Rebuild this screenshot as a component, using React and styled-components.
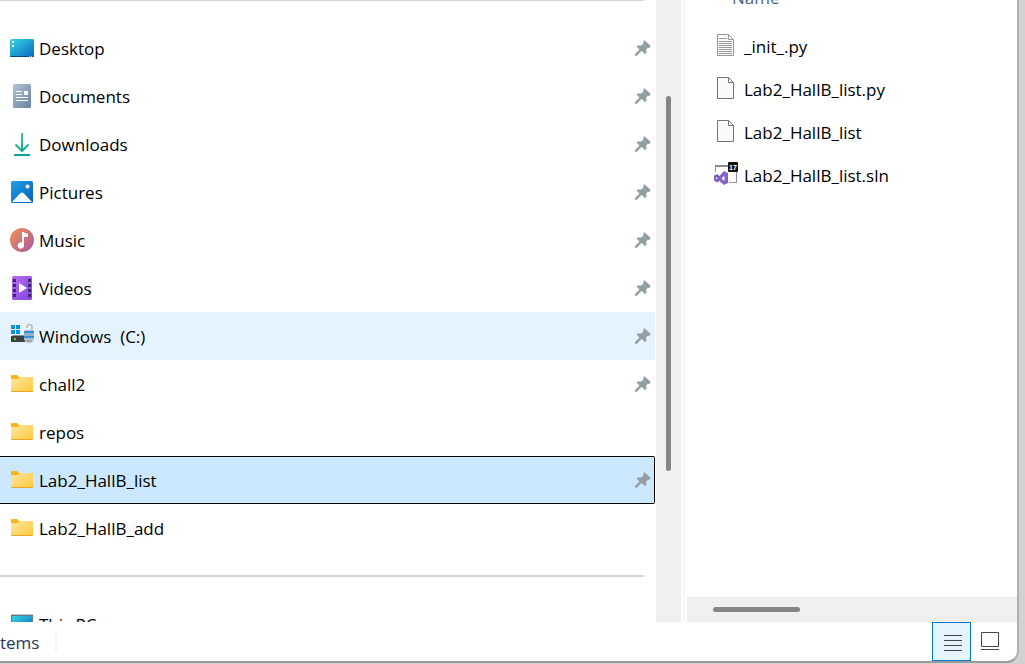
import React from 'react';
import styled, { createGlobalStyle } from 'styled-components';

const textColor = '#000';
const mutedColor = '#4c607a';
const trackColor = '#efefef';
const thumbColor = '#858585';
const accentColor = '#0078d4';

const GlobalStyle = createGlobalStyle`
  * {
    box-sizing: border-box;
  }

  body {
    margin: 0;
    background: #d2d2d2;
    color: ${textColor};
    font-family: 'Open Sans', 'Noto Sans', sans-serif;
    font-size: 17px;
    line-height: 24px;
  }
`;

const Desktop = styled.div`
  height: 100vh;
  overflow: hidden;
  padding: 0 6px 1px 0;
`;

const Window = styled.div`
  background: #fff;
  border-bottom: 2px solid #9b9b9b;
  border-bottom-right-radius: 12px;
  border-right: 2px solid #aeb0b1;
  display: flex;
  flex-direction: column;
  height: 100%;
  overflow: hidden;
`;

const Panes = styled.div`
  display: grid;
  flex: 1;
  grid-template-columns: 64vw 25px 6px minmax(0, 1fr);
  min-height: 0;
`;

const Sidebar = styled.nav`
  overflow: hidden;
  padding-right: 1px;
`;

const Divider = styled.hr`
  border: 0;
  border-top: ${({ $cut }) => ($cut ? 1 : 2)}px solid #d5d5d5;
  margin: ${({ $cut }) => ($cut ? 0 : 23)}px 11px 23px 0;
`;

const List = styled.ul`
  list-style: none;
  margin: 0;
  padding: 0;
`;

const Place = styled.button`
  align-items: center;
  background: ${({ $state }) => ({ hover: '#e5f3ff', selected: '#cce8ff' }[$state] || 'transparent')};
  border: 1px solid ${({ $state }) => ($state === 'selected' ? '#000' : 'transparent')};
  border-left: 0;
  border-radius: 0 2px 2px 0;
  color: inherit;
  display: flex;
  font: inherit;
  gap: 5px;
  height: 48px;
  padding: 0 3px 0 10px;
  text-align: left;
  width: 100%;
`;

const Label = styled.span`
  flex: 1;
  padding-top: 2px;
  white-space: pre;
`;

const VerticalTrack = styled.div`
  background: ${trackColor};
  padding-top: 96px;
`;

const VerticalThumb = styled.div`
  background: ${thumbColor};
  border-radius: 3px;
  height: 375px;
  margin: 0 10px;
`;

const Splitter = styled.div`
  border-right: 2px solid #f7f7f7;
  margin-right: 2px;
`;

const Content = styled.main`
  display: flex;
  flex-direction: column;
  min-width: 0;
`;

const Files = styled.div`
  flex: 1;
  min-height: 0;
  overflow: hidden;
`;

const ColumnHeader = styled.div`
  color: ${mutedColor};
  margin: -14px 0 14px 45px;
`;

const File = styled.button`
  align-items: center;
  background: transparent;
  border: 0;
  color: inherit;
  display: flex;
  font: inherit;
  gap: 6px;
  height: 43px;
  padding: 0 27px;
  text-align: left;
  width: 100%;
`;

const HorizontalTrack = styled.div`
  background: ${trackColor};
  height: 25px;
  padding: 10px 26px;
`;

const HorizontalThumb = styled.div`
  background: ${thumbColor};
  border-radius: 3px;
  height: 5px;
  width: 87px;
`;

const StatusBar = styled.footer`
  align-items: center;
  display: flex;
  height: 39px;
  padding-right: 7px;
`;

const ItemCount = styled.span`
  border-right: 2px solid #f5f5f5;
  color: #1e395b;
  line-height: 20px;
  margin-right: auto;
  padding-top: 2px;
  width: 57px;
`;

const ViewButton = styled.button`
  background: ${({ $active }) => ($active ? '#e5f3fb' : 'transparent')};
  border: 1px solid ${({ $active }) => ($active ? accentColor : 'transparent')};
  display: grid;
  height: 39px;
  padding: 0;
  place-items: center;
  width: 39px;
`;

const Svg = styled.svg.attrs({ 'aria-hidden': true })`
  display: block;
  flex: none;
  overflow: visible;
`;

const Icon = ({ children, size = 24 }) => (
  <Svg width={size} height={size} viewBox={`0 0 ${size} ${size}`}>{children}</Svg>
);

const Gradient = ({ id, from, to }) => (
  <linearGradient id={id} x1="0" y1="0" x2="1" y2="1">
    <stop stopColor={from} />
    <stop offset="1" stopColor={to} />
  </linearGradient>
);

const DesktopIcon = () => (
  <Icon>
    <Gradient id="desktop" from="#35d8e6" to="#0b67bd" />
    <rect y="3" width="24" height="18" rx="1.5" fill="url(#desktop)" />
    <path d="M0 20h24v0q0 1-1 1H1q-1 0-1-1z" fill="#0b4a7c" />
    <path d="M2 5h2v2H2zM2 9h2v2H2z" fill="#fff" />
    <path d="M19 20h1v1h-1zM21 20h1v1h-1z" fill="#b9dcf3" />
  </Icon>
);

const DocumentsIcon = () => (
  <Icon>
    <Gradient id="documents" from="#b3c5d8" to="#67819f" />
    <rect x="3" width="18" height="24" rx="1.5" fill="url(#documents)" />
    <path d="M6 7h6v1H6zM6 10h6v1H6zM14 7h4v4h-4zM6 13h12v1H6zM6 16h12v1H6z" fill="#fff" />
  </Icon>
);

const DownloadsIcon = () => (
  <Icon>
    <linearGradient id="downloads" x1="0" y1="0" x2="0" y2="24" gradientUnits="userSpaceOnUse">
      <stop stopColor="#36cf93" />
      <stop offset="1" stopColor="#0ca092" />
    </linearGradient>
    <path d="M12 1v18M5.5 12.5L12 19l6.5-6.5M4 23h16" fill="none" stroke="url(#downloads)" strokeWidth="2" />
  </Icon>
);

const PicturesIcon = () => (
  <Icon>
    <Gradient id="pictures" from="#20a0e9" to="#0461b5" />
    <rect x="1" y="1" width="22" height="22" rx="1.5" fill="url(#pictures)" />
    <path d="M2 22l8.5-9q1.5-1.2 3 0l8.5 9z" fill="#f5faff" />
    <circle cx="17.5" cy="6.5" r="2" fill="#fff" />
  </Icon>
);

const MusicIcon = () => (
  <Icon>
    <Gradient id="music" from="#f39155" to="#a9589d" />
    <circle cx="12" cy="12" r="12" fill="url(#music)" />
    <path d="M12 4v10.5a3.2 3.2 0 1 0 2 2.5V9h4V5.500q-3.500 0-4-1.500z" fill="#fff" />
  </Icon>
);

const VideosIcon = () => (
  <Icon>
    <Gradient id="videos" from="#b66cf0" to="#8246e0" />
    <rect x="2" width="20" height="24" rx="1.5" fill="url(#videos)" />
    <path
      d="M3 3h3v3H3zM3 8h3v3H3zM3 13h3v3H3zM3 18h3v3H3zM18 3h3v3h-3zM18 8h3v3h-3zM18 13h3v3h-3zM18 18h3v3h-3z"
      fill="#45216f"
    />
    <path d="M9 7l8 5-8 5z" fill="#fff" />
  </Icon>
);

const DriveIcon = () => (
  <Icon>
    <path d="M1 1h4v4H1zM6 1h4v4H6zM1 6h4v4H1zM6 6h4v4H6z" fill="#0a91e3" />
    <path d="M3 11h11v2H1z" fill="#8b8e91" />
    <path d="M1 12h14v6H1z" fill="#3c4043" />
    <path d="M4 14h2v2H4z" fill="#34dc3b" />
    <path d="M17 4V3q0-2.500 2.500-2.500T22 3v4" fill="none" stroke="#b8c0c5" strokeWidth="1.6" />
    <path d="M15 6h8l1 3v6q-1 4-5 4t-5-4V9z" fill="#b4bec6" />
    <path d="M14 7h10v2H14zM14 12h10v2H14z" fill="#2f93d6" />
    <path d="M14 9h10v3H14z" fill="#93b4ce" />
    <path d="M16 16h6l-1 2h-4z" fill="#98a3ab" />
  </Icon>
);

const FolderIcon = () => (
  <Icon>
    <Gradient id="folder" from="#ffe7a0" to="#ffc83a" />
    <path d="M1 4q0-1 1-1h5l2 2h13q1 0 1 1v6H1z" fill="#f7b51e" />
    <path d="M1 7h7l2-2h12q1 0 1 1v13q0 1-1 1H2q-1 0-1-1z" fill="url(#folder)" />
    <path d="M1 19h22q0 1-1 1H2q-1 0-1-1z" fill="#eaa61c" />
  </Icon>
);

const ComputerIcon = () => (
  <Icon>
    <Gradient id="computer" from="#35d8e6" to="#0b67bd" />
    <path d="M1 2h22v17H1z" fill="#637985" />
    <path d="M1 2h22v1H1z" fill="#bdc5ca" />
    <path d="M2 4h20v14H2z" fill="url(#computer)" />
  </Icon>
);

const PinIcon = () => (
  <Icon size={16}>
    <path
      d="M9 0l6.5 5.5-.5 2-2.5.5-1.5 2 .5 3-1.5 1-3.500-3L2 15.500.5 16 0 15.500 0 14l4.500-4.500L1.500 6.500l1-1L6 5.500l2-1.500z"
      fill="#939fa5"
    />
  </Icon>
);

const PageIcon = ({ lined }) => (
  <Icon>
    <path d="M3.5.5h11l5 5v16h-16z" fill="#fafafa" stroke={lined ? '#969696' : '#747474'} />
    <path d="M14.5.5v5h5" fill="none" stroke={lined ? '#969696' : '#747474'} />
    {lined && (
      <path d="M5 4.5h8M5 7.5h13M5 9.5h13M5 11.5h13M5 13.5h13M5 15.5h13M5 17.5h13M5 19.5h13" stroke="#999" />
    )}
  </Icon>
);

const SolutionIcon = () => (
  <Icon>
    <path d="M1.5 3v6M22.5 8v11.5M15 19.5h8" fill="none" stroke="#8c9298" />
    <path d="M1 2h14v2H1z" fill="#858b91" />
    <rect x="14" y="-1" width="10" height="10" rx="1" fill="#111" />
    <text x="19" y="7" fill="#fff" fontFamily="Liberation Sans, sans-serif" fontSize="7" fontWeight="700" textAnchor="middle">17</text>
    <path
      d="M10 8l4 2v10l-4 2-4.5-4L3 19.500 0 17.500v-5L3 11l2.500 2L10 8zM10.500 12.500L7.500 15.500l3 2.500zM2 14v2.500l1.500-1.200z"
      fill="#8661c5"
      fillRule="evenodd"
    />
  </Icon>
);

const places = [
  { name: 'Desktop', icon: DesktopIcon, pinned: true },
  { name: 'Documents', icon: DocumentsIcon, pinned: true },
  { name: 'Downloads', icon: DownloadsIcon, pinned: true },
  { name: 'Pictures', icon: PicturesIcon, pinned: true },
  { name: 'Music', icon: MusicIcon, pinned: true },
  { name: 'Videos', icon: VideosIcon, pinned: true },
  { name: 'Windows  (C:)', icon: DriveIcon, pinned: true, state: 'hover' },
  { name: 'chall2', icon: FolderIcon, pinned: true },
  { name: 'repos', icon: FolderIcon },
  { name: 'Lab2_HallB_list', icon: FolderIcon, pinned: true, state: 'selected' },
  { name: 'Lab2_HallB_add', icon: FolderIcon },
];

const files = [
  { name: '_init_.py', icon: <PageIcon lined /> },
  { name: 'Lab2_HallB_list.py', icon: <PageIcon /> },
  { name: 'Lab2_HallB_list', icon: <PageIcon /> },
  { name: 'Lab2_HallB_list.sln', icon: <SolutionIcon /> },
];

const App = () => (
  <Desktop>
    <GlobalStyle />
    <Window>
      <Panes>
        <Sidebar>
          <Divider $cut />
          <List>
            {places.map(({ name, icon: PlaceIcon, pinned, state }) => (
              <li key={name}>
                <Place type="button" $state={state}>
                  <PlaceIcon />
                  <Label>{name}</Label>
                  {pinned && <PinIcon />}
                </Place>
              </li>
            ))}
          </List>
          <Divider />
          <Place type="button">
            <ComputerIcon />
            <Label>This PC</Label>
          </Place>
        </Sidebar>
        <VerticalTrack>
          <VerticalThumb />
        </VerticalTrack>
        <Splitter />
        <Content>
          <Files>
            <ColumnHeader>Name</ColumnHeader>
            <List>
              {files.map(({ name, icon }) => (
                <li key={name}>
                  <File type="button">
                    {icon}
                    <Label>{name}</Label>
                  </File>
                </li>
              ))}
            </List>
          </Files>
          <HorizontalTrack>
            <HorizontalThumb />
          </HorizontalTrack>
        </Content>
      </Panes>
      <StatusBar>
        <ItemCount>tems</ItemCount>
        <ViewButton type="button" aria-label="Details" $active>
          <Icon>
            <path d="M4 5.5h18M4 10.5h18M4 15.5h18M4 20.5h18" stroke="#454545" />
          </Icon>
        </ViewButton>
        <ViewButton type="button" aria-label="Large icons">
          <Icon>
            <path d="M2.5 2.5h17v14h-17zM2 19.5h18" fill="none" stroke="#454545" />
          </Icon>
        </ViewButton>
      </StatusBar>
    </Window>
  </Desktop>
);

export default App;
